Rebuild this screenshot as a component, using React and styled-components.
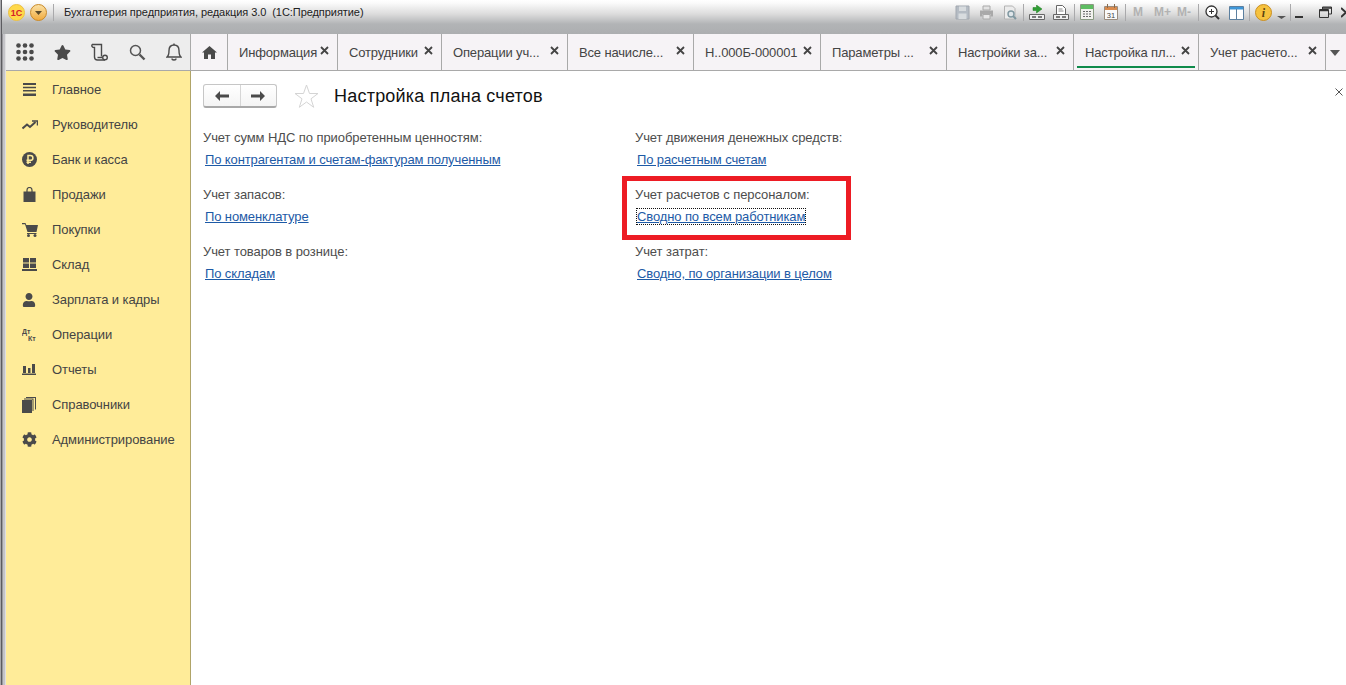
import React from 'react';
import styled, { createGlobalStyle } from 'styled-components';
import { FaStar, FaUser, FaCog } from 'react-icons/fa';

const GlobalStyle = createGlobalStyle`
  html, body {
    margin: 0;
    padding: 0;
    background: #fff;
    overflow: hidden;
  }
  * { box-sizing: border-box; }
`;

const Window = styled.div`
  width: 1346px;
  height: 685px;
  overflow: hidden;
  display: flex;
  flex-direction: column;
  background: linear-gradient(90deg, #a8a8ac 0, #a8a8ac 1px, #5c5c60 1px, #5c5c60 2px, #9a9a9e 2px, #9a9a9e 3px, #c4c4c8 3px, #c4c4c8 5px, #e0e0e2 5px);
  font-family: 'Liberation Sans', Arial, sans-serif;
`;

const TitleBar = styled.div`
  height: 34px;
  flex: none;
  margin-left: 2px;
  display: flex;
  align-items: flex-start;
  padding-top: 3px;
  background: linear-gradient(180deg, #ffffff 0, #fbfbfb 3px, #dcdcdc 14px, #b2b4b6 24px, #acaeb0 34px);
`;

const TitleLeft = styled.div`
  display: flex;
  align-items: center;
  height: 18px;
  padding-left: 6px;
`;

const TitleText = styled.span`
  margin-left: 4px;
  font-size: 11px;
  color: #222;
  white-space: pre;
  letter-spacing: -0.06px;
`;

const Tools = styled.div`
  margin-left: auto;
  display: flex;
  align-items: center;
  height: 18px;
  width: 391px;
  flex: none;
`;

const Sep = styled.i`
  width: 1px;
  height: 17px;
  background: #a9a9ab;
  margin: 0 ${p => p.$gap || 5}px;
  flex: none;
`;

const Tool = styled.span`
  display: flex;
  flex: none;
  margin-right: ${p => p.$mr || 0}px;
`;

const MemKey = styled.span`
  flex: none;
  width: ${p => p.$w}px;
  margin-right: ${p => p.$mr ?? 8}px;
  font-size: 12px;
  font-weight: bold;
  color: #b2b2b2;
  white-space: nowrap;
`;

const TabBar = styled.div`
  height: 37px;
  flex: none;
  margin-left: 6px;
  display: flex;
  background: #f6f3f6;
  border-bottom: 1px solid #a9a9a9;
`;

const Launch = styled.div`
  width: 185px;
  flex: none;
  display: flex;
  align-items: center;
  background: #ededed;
  border-right: 1px solid #a9a9a9;
  padding-left: 10px;
`;

const LaunchIcon = styled.span`
  width: 37.5px;
  flex: none;
  display: flex;
`;

const HomeTab = styled.div`
  width: 37px;
  flex: none;
  display: flex;
  align-items: center;
  justify-content: center;
  border-right: 1px solid #a9a9a9;
`;

const Tab = styled.div`
  width: ${p => p.$w}px;
  flex: none;
  position: relative;
  display: flex;
  align-items: center;
  padding-left: 11px;
  border-right: 1px solid #a9a9a9;
  font-size: 13px;
  letter-spacing: -0.15px;
  color: #444;
  white-space: nowrap;
`;

const TabClose = styled.span`
  position: absolute;
  right: 8px;
  top: 12px;
  display: flex;
`;

const ActiveLine = styled.span`
  position: absolute;
  left: 3px;
  right: 3px;
  bottom: 2px;
  height: 2px;
  background: #0f8a4b;
`;

const More = styled.div`
  flex: 1;
  display: flex;
  justify-content: center;
  padding-top: 16px;
  padding-right: 2px;
`;

const Body = styled.div`
  flex: 1;
  margin-left: 6px;
  display: flex;
  min-height: 0;
`;

const Sidebar = styled.nav`
  width: 185px;
  flex: none;
  padding-top: 1px;
  background: #ffec99;
  border-right: 1px solid #b0a468;
`;

const NavRow = styled.div`
  height: 35px;
  display: flex;
  align-items: center;
  font-size: 13px;
  letter-spacing: -0.08px;
  color: #444;
  white-space: nowrap;
`;

const NavIcon = styled.span`
  width: 46px;
  padding-left: 16px;
  flex: none;
  display: flex;
  align-items: center;
`;

const Content = styled.main`
  flex: 1;
  position: relative;
  background: #fff;
  padding: 12px 0 0 12px;
`;

const Header = styled.div`
  display: flex;
  align-items: center;
  height: 26px;
`;

const NavButtons = styled.div`
  width: 74px;
  height: 24px;
  flex: none;
  display: flex;
  border: 1px solid #c6c6c6;
  border-bottom: 2px solid #a8a8a8;
  border-radius: 3px;
  background: linear-gradient(180deg, #ffffff, #f4f4f4);
`;

const NavButton = styled.span`
  flex: 1;
  display: flex;
  align-items: center;
  justify-content: center;
  & + & { border-left: 1px solid #d6d6d6; }
`;

const FormTitle = styled.h1`
  margin: 1px 0 0 15px;
  font-size: 18px;
  letter-spacing: 0.22px;
  font-weight: normal;
  color: #111;
  white-space: nowrap;
`;

const CloseForm = styled.span`
  position: absolute;
  right: 3px;
  top: 17px;
  display: flex;
`;

const Columns = styled.div`
  display: grid;
  grid-template-columns: 432px 1fr;
  margin-top: 14px;
`;

const Field = styled.div`
  height: 57px;
  padding-top: 7px;
`;

const Label = styled.div`
  height: 15px;
  font-size: 13px;
  line-height: 15px;
  color: #4d4d4d;
  white-space: nowrap;
  letter-spacing: -0.08px;
`;

const FieldLink = styled.a`
  display: inline-block;
  margin: 7px 0 0 2px;
  font-size: 13px;
  line-height: 15px;
  color: #1d5aa6;
  text-decoration: underline;
  white-space: nowrap;
  letter-spacing: -0.11px;
  outline: ${p => (p.$focused ? '1px dotted #111' : 'none')};
`;

const Highlight = styled.div`
  position: absolute;
  left: 431px;
  top: 105px;
  width: 229px;
  height: 64px;
  border: 5px solid #ed1c24;
`;

const Dark = '#4a4a4a';

const Logo1C = () => (
  <svg width="17" height="17" viewBox="0 0 17 17">
    <circle cx="8.5" cy="8.5" r="8" fill="#ffd94a" stroke="#ecc044" />
    <text x="8.5" y="11.5" textAnchor="middle" fontSize="9" fontWeight="bold" fontFamily="Liberation Sans" fill="#d5202a">1С</text>
  </svg>
);

const MenuCircle = () => (
  <svg width="17" height="17" viewBox="0 0 17 17" style={{ marginLeft: 5 }}>
    <defs>
      <linearGradient id="mc" x1="0" y1="0" x2="0" y2="1">
        <stop offset="0" stopColor="#fbe3a8" />
        <stop offset="1" stopColor="#f0a93c" />
      </linearGradient>
    </defs>
    <circle cx="8.5" cy="8.5" r="8" fill="url(#mc)" stroke="#c98a2b" />
    <path d="M5 7h7l-3.500 4z" fill="#5a4a2a" />
  </svg>
);

const SaveIcon = () => (
  <svg width="15" height="15" viewBox="0 0 15 15">
    <path d="M1 1h13v13H1z" fill="#b5bcc4" stroke="#a2a8b0" />
    <path d="M4 1.500h7v4.500H4zM3.500 8.500h8V14h-8z" fill="#d8dcdf" />
  </svg>
);

const PrintIcon = () => (
  <svg width="15" height="15" viewBox="0 0 15 15">
    <path d="M4 1h7v4H4z" fill="#e3e3e3" stroke="#aaa" />
    <path d="M1 5.500h13v6h-2.500V9h-8v2.500H1z" fill="#a9a9a9" />
    <path d="M4 9.500h7V14H4z" fill="#e6e6e6" stroke="#aaa" />
  </svg>
);

const PreviewIcon = () => (
  <svg width="15" height="15" viewBox="0 0 15 15">
    <path d="M1.500 1h8l2.500 2.500V14H1.500z" fill="#ececec" stroke="#b3b3b3" />
    <circle cx="8" cy="9" r="3" fill="#dfe6ea" stroke="#7f97a0" strokeWidth="1.400" />
    <path d="M10 11l3 3" stroke="#7f97a0" strokeWidth="2" />
  </svg>
);

const Tray = () => (
  <>
    <path d="M.5 9.500h15v5H.500z" fill="#efefef" stroke="#666" />
    <path d="M3 12h4M9 12h4" stroke="#555" strokeWidth="1.500" />
  </>
);

const TrayGreenIcon = () => (
  <svg width="16" height="15" viewBox="0 0 16 15">
    <path d="M4 2.500h3.500V0L13 4l-5.500 4V5.500H4z" fill="#2f9e35" stroke="#1f7d1f" strokeWidth=".5" />
    <Tray />
  </svg>
);

const TrayDocIcon = () => (
  <svg width="16" height="15" viewBox="0 0 16 15">
    <path d="M3.500 .5h6l3 3v6h-9z" fill="#fff" stroke="#666" />
    <path d="M5.500 4h4M5.500 6h5" stroke="#888" />
    <Tray />
  </svg>
);

const CalcIcon = () => (
  <svg width="14" height="16" viewBox="0 0 14 16">
    <path d="M.5.500h13v15H.500z" fill="#f2f2ee" stroke="#8a9a82" />
    <path d="M1 1h12v4H1z" fill="#5ebd62" />
    <path d="M3 7.500h2M6 7.500h2M9 7.500h2M3 10h2M6 10h2M9 10h2M3 12.500h2M6 12.500h2M9 12.500h2" stroke="#666" />
  </svg>
);

const CalendarIcon = () => (
  <svg width="14" height="16" viewBox="0 0 14 16">
    <path d="M.5 2.500h13v13H.500z" fill="#fafafa" stroke="#9a8c7e" />
    <path d="M1 3h12v3H1z" fill="#d98a4c" />
    <path d="M3.500 0v4M10.500 0v4" stroke="#8a6a4c" />
    <text x="7" y="13.500" textAnchor="middle" fontSize="7.500" fontFamily="Liberation Sans" fill="#444">31</text>
  </svg>
);

const ZoomIcon = () => (
  <svg width="15" height="15" viewBox="0 0 15 15" fill="none">
    <circle cx="6.500" cy="6.500" r="5.500" stroke="#333" strokeWidth="1.300" fill="#fff" />
    <path d="M4 6.500h5M6.500 4v5" stroke="#333" />
    <path d="M10.500 10.500l3.500 3.500" stroke="#333" strokeWidth="2" />
  </svg>
);

const PanelIcon = () => (
  <svg width="15" height="15" viewBox="0 0 15 15">
    <path d="M.5 1.500h14v13H.500z" fill="#fff" stroke="#5b7f9f" />
    <path d="M1 2h13v2.500H1z" fill="#3e96d8" />
    <path d="M7.500 4v10" stroke="#5b7f9f" />
  </svg>
);

const InfoIcon = () => (
  <svg width="17" height="17" viewBox="0 0 17 17">
    <circle cx="8.500" cy="8.500" r="8" fill="#f6c23e" stroke="#c98f22" />
    <text x="8.500" y="13" textAnchor="middle" fontSize="12" fontWeight="bold" fontStyle="italic" fontFamily="Liberation Serif" fill="#5a4310">i</text>
  </svg>
);

const SmallCaret = () => (
  <svg width="9" height="15" viewBox="0 0 9 15">
    <path d="M0 11h9l-4.500 3z" fill="#555" />
  </svg>
);

const MinIcon = () => (
  <svg width="9" height="15" viewBox="0 0 9 15">
    <path d="M0 11h8v2H0z" fill="#333" />
  </svg>
);

const RestoreIcon = () => (
  <svg width="13" height="13" viewBox="0 0 13 13" fill="none" stroke="#333">
    <path d="M3.500 3V1h9v7h-3" />
    <path d="M.5 3.500h9v8h-9z" />
    <path d="M1 4.500h8M4 2h8" strokeWidth="1.500" />
  </svg>
);

const WinClose = () => (
  <svg width="6" height="11" viewBox="0 0 6 11">
    <path d="M0 1l5 4.500L0 10" stroke="#333" strokeWidth="2" fill="none" />
  </svg>
);

const GridDots = () => (
  <svg width="18" height="18" viewBox="0 0 18 18" fill={Dark}>
    {[2.500, 9, 15.500].flatMap(y => [2.500, 9, 15.500].map(x => (
      <circle key={`${x}-${y}`} cx={x} cy={y} r="2.300" />
    )))}
  </svg>
);

const History = () => (
  <svg width="17" height="18" viewBox="0 0 17 18" fill="none" stroke={Dark} strokeWidth="1.400">
    <path d="M1 1.500h9.500v12" />
    <path d="M1 1.500c-.500 1.500 0 3 2.500 3V14c0 2 1.500 3 3 3h7.500" />
    <circle cx="14" cy="14.500" r="2.300" />
    <path d="M6.500 14.500h5" />
  </svg>
);

const Lens = () => (
  <svg width="17" height="17" viewBox="0 0 17 17" fill="none" stroke="#555">
    <circle cx="6.500" cy="6.500" r="5" strokeWidth="1.500" />
    <path d="M10.500 10.500l5 5" strokeWidth="2.400" />
  </svg>
);

const Bell = () => (
  <svg width="16" height="18" viewBox="0 0 16 18" fill="none" stroke={Dark} strokeWidth="1.400">
    <path d="M1 14c2-1.500 2-3 2-6.500C3 4 5 2 8 2s5 2 5 5.500c0 3.500 0 5 2 6.500z" />
    <path d="M8 .5v1.500M6 15.500c0 2 4 2 4 0" />
  </svg>
);

const Home = () => (
  <svg width="15" height="13" viewBox="0 0 15 13" fill={Dark}>
    <path d="M7.500 0L15 6.500h-2V13H9V8.500H6V13H2V6.500H0z" />
  </svg>
);

const Burger = () => (
  <svg width="15" height="13" viewBox="0 0 15 13" fill={Dark}>
    <path d="M1 0h13v2H1zM1 3.700h13v1.600H1zM1 7h13v1.600H1zM1 10.500h13v2.500H1z" />
  </svg>
);

const Trend = () => (
  <svg width="16" height="10" viewBox="0 0 16 10" fill="none" stroke={Dark} strokeWidth="2">
    <path d="M.5 8.500l4.500-4 3 2.500 5.500-5" />
    <path d="M10 1h5.500v4.500" strokeWidth="1.500" />
  </svg>
);

const Ruble = () => (
  <svg width="15" height="15" viewBox="0 0 15 15">
    <circle cx="7.500" cy="7.500" r="7.500" fill={Dark} />
    <path d="M6 12V3.500h2.500a2.300 2.300 0 0 1 0 4.800H4.500M4.500 10.200H9" fill="none" stroke="#ffec99" strokeWidth="1.500" />
  </svg>
);

const Bag = () => (
  <svg width="13" height="15" viewBox="0 0 13 15" style={{ marginLeft: 1 }}>
    <path d="M.5 4.500h12V15H.500z" fill={Dark} />
    <path d="M4 6V3a2.500 2.500 0 0 1 5 0v3" fill="none" stroke={Dark} strokeWidth="1.200" />
  </svg>
);

const Cart = () => (
  <svg width="16" height="14" viewBox="0 0 16 14" fill={Dark}>
    <path d="M0 0h3.500l.8 2H16l-1.500 7H5.500L3 1.300H0z" />
    <path d="M5 10h9.500v1H5z" />
    <circle cx="6.500" cy="12.500" r="1.500" />
    <circle cx="13" cy="12.500" r="1.500" />
  </svg>
);

const Warehouse = () => (
  <svg width="15" height="13" viewBox="0 0 15 13" fill={Dark}>
    <path d="M1 0h6v4.500H1zM8 0h6v4.500H8zM1 5.500h6V10H1zM8 5.500h6V10H8zM0 11h15v2H0z" />
  </svg>
);

const DtKt = () => (
  <svg width="16" height="15" viewBox="0 0 16 15">
    <text x="0" y="6.500" fontSize="7" fontWeight="bold" fontFamily="Liberation Sans" fill={Dark}>Дт</text>
    <text x="6" y="14" fontSize="7" fontWeight="bold" fontFamily="Liberation Sans" fill={Dark}>Кт</text>
  </svg>
);

const Bars = () => (
  <svg width="14" height="11" viewBox="0 0 14 11" fill={Dark}>
    <path d="M1 2h3v7H1zM6 4h2.500v5H6zM10 0h3v9h-3zM0 9.500h14V11H0z" />
  </svg>
);

const Books = () => (
  <svg width="14" height="16" viewBox="0 0 14 16" fill={Dark}>
    <path d="M0 3h10v13H0zM2 1.500h9.500V14h-1V2.500H2zM4 0h10v12.500h-1V1H4z" />
  </svg>
);

const TabX = () => (
  <svg width="9" height="9" viewBox="0 0 9 9">
    <path d="M1 1l7 7M8 1L1 8" stroke="#444" strokeWidth="1.800" />
  </svg>
);

const ArrowLeft = () => (
  <svg width="14" height="10" viewBox="0 0 14 10" fill="#4a4a4a">
    <path d="M0 5l5-5v3.600h9v2.800H5V10z" />
  </svg>
);

const ArrowRight = () => (
  <svg width="14" height="10" viewBox="0 0 14 10" fill="#4a4a4a">
    <path d="M14 5L9 0v3.600H0v2.800h9V10z" />
  </svg>
);

const OutlineStar = () => (
  <svg width="25" height="24" viewBox="0 0 25 24" fill="#fff" stroke="#d4d4d4" style={{ marginLeft: 17 }}>
    <path d="M12.500 1l3 8.500h8.500l-7 5.300 2.700 8.500-7.200-5.300-7.200 5.300 2.700-8.500-7-5.300H9.500z" />
  </svg>
);

const navItems = [
  ['Главное', <Burger />],
  ['Руководителю', <Trend />],
  ['Банк и касса', <Ruble />],
  ['Продажи', <Bag />],
  ['Покупки', <Cart />],
  ['Склад', <Warehouse />],
  ['Зарплата и кадры', <FaUser size={14} color={Dark} />],
  ['Операции', <DtKt />],
  ['Отчеты', <Bars />],
  ['Справочники', <Books />],
  ['Администрирование', <FaCog size={15} color={Dark} />],
];

const tabs = [
  ['Информация', 110],
  ['Сотрудники', 104],
  ['Операции уч...', 126],
  ['Все начисле...', 126],
  ['Н..000Б-000001', 127],
  ['Параметры ...', 126],
  ['Настройки за...', 127],
  ['Настройка пл...', 125, true],
  ['Учет расчето...', 127],
];

const leftFields = [
  ['Учет сумм НДС по приобретенным ценностям:', 'По контрагентам и счетам-фактурам полученным'],
  ['Учет запасов:', 'По номенклатуре'],
  ['Учет товаров в рознице:', 'По складам'],
];

const rightFields = [
  ['Учет движения денежных средств:', 'По расчетным счетам'],
  ['Учет расчетов с персоналом:', 'Сводно по всем работникам', true],
  ['Учет затрат:', 'Сводно, по организации в целом'],
];

const FieldColumn = ({ fields }) => (
  <div>
    {fields.map(([label, link, focused]) => (
      <Field key={label}>
        <Label>{label}</Label>
        <FieldLink $focused={focused}>{link}</FieldLink>
      </Field>
    ))}
  </div>
);

const App = () => {
  return (
    <Window>
      <GlobalStyle />
      <TitleBar>
        <TitleLeft>
          <Logo1C />
          <MenuCircle />
          <Sep $gap={6} />
          <TitleText>Бухгалтерия предприятия, редакция 3.0  (1С:Предприятие)</TitleText>
        </TitleLeft>
        <Tools>
          <Tool $mr={9}><SaveIcon /></Tool>
          <Tool $mr={9}><PrintIcon /></Tool>
          <Tool><PreviewIcon /></Tool>
          <Sep />
          <Tool $mr={8}><TrayGreenIcon /></Tool>
          <Tool><TrayDocIcon /></Tool>
          <Sep />
          <Tool $mr={10}><CalcIcon /></Tool>
          <Tool><CalendarIcon /></Tool>
          <Sep $gap={7} />
          <MemKey $w={13}>M</MemKey>
          <MemKey $w={15}>M+</MemKey>
          <MemKey $w={15} $mr={0}>M-</MemKey>
          <Sep $gap={6} />
          <Tool $mr={9}><ZoomIcon /></Tool>
          <Tool><PanelIcon /></Tool>
          <Sep />
          <Tool $mr={5}><InfoIcon /></Tool>
          <Tool><SmallCaret /></Tool>
          <Sep $gap={4} />
          <Tool $mr={15}><MinIcon /></Tool>
          <Tool $mr={9}><RestoreIcon /></Tool>
          <Tool><WinClose /></Tool>
        </Tools>
      </TitleBar>

      <TabBar>
        <Launch>
          <LaunchIcon><GridDots /></LaunchIcon>
          <LaunchIcon><FaStar size={17} color={Dark} /></LaunchIcon>
          <LaunchIcon><History /></LaunchIcon>
          <LaunchIcon><Lens /></LaunchIcon>
          <LaunchIcon><Bell /></LaunchIcon>
        </Launch>
        <HomeTab><Home /></HomeTab>
        {tabs.map(([title, w, active]) => (
          <Tab key={title} $w={w}>
            {title}
            <TabClose><TabX /></TabClose>
            {active && <ActiveLine />}
          </Tab>
        ))}
        <More>
          <svg width="10" height="6" viewBox="0 0 10 6"><path d="M0 0h10L5 6z" fill="#555" /></svg>
        </More>
      </TabBar>

      <Body>
        <Sidebar>
          {navItems.map(([title, icon]) => (
            <NavRow key={title}>
              <NavIcon>{icon}</NavIcon>
              {title}
            </NavRow>
          ))}
        </Sidebar>
        <Content>
          <Header>
            <NavButtons>
              <NavButton><ArrowLeft /></NavButton>
              <NavButton><ArrowRight /></NavButton>
            </NavButtons>
            <OutlineStar />
            <FormTitle>Настройка плана счетов</FormTitle>
          </Header>
          <CloseForm>
            <svg width="8" height="8" viewBox="0 0 8 8"><path d="M.5.5l7 7M7.500.5l-7 7" stroke="#555" /></svg>
          </CloseForm>
          <Columns>
            <FieldColumn fields={leftFields} />
            <FieldColumn fields={rightFields} />
          </Columns>
          <Highlight />
        </Content>
      </Body>
    </Window>
  );
};

export default App;
